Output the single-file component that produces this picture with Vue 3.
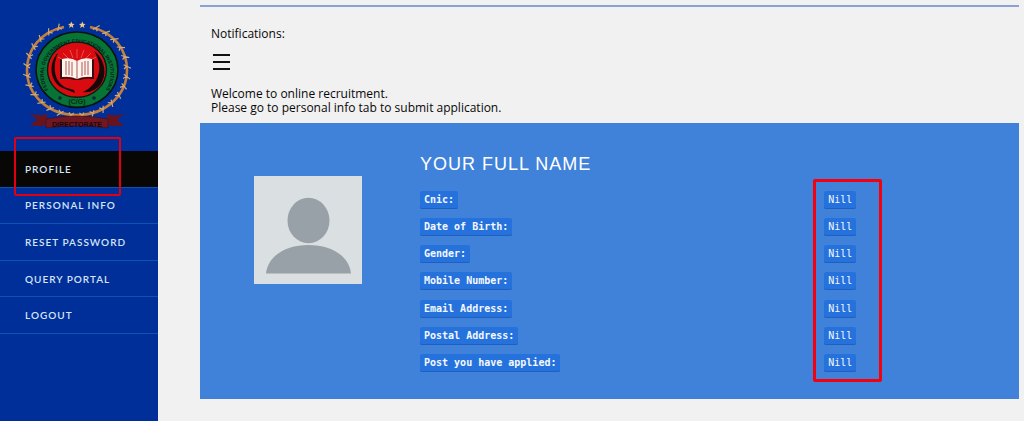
<script setup>
const links = ['Profile', 'Personal Info', 'Reset Password', 'Query Portal', 'Logout']

const fields = [
  'Cnic:',
  'Date of Birth:',
  'Gender:',
  'Mobile Number:',
  'Email Address:',
  'Postal Address:',
  'Post you have applied:',
]

// Thorns of the wreath, spread round the ellipse with a gap at the top for the stars.
const thorns = Array.from({ length: 26 }, (_, i) => {
  const a = ((-68 + (i * 316) / 25) * Math.PI) / 180
  const at = (rx, ry, t) => `${(77 + rx * Math.cos(t)).toFixed(1)} ${(70 + ry * Math.sin(t)).toFixed(1)}`
  return `M${at(47, 43, a - 0.04)} L${at(54, 49, a + 0.05)} M${at(50, 46, a)} L${at(47, 43, a + 0.06)}`
}).join(' ')
</script>

<template>
  <div class="page">
    <aside class="sidebar">
      <svg class="logo" viewBox="20 18 114 116" role="img" aria-label="Federal Government Educational Institutions Directorate">
        <defs>
          <path id="ring-top" d="M50 92 A33.500 31 0 1 1 104 92" />
        </defs>
        <path d="M64 27 C40 32 27 50 27 70 C27 94 47 115 77 115 C107 115 127 94 127 70 C127 50 114 32 90 27" fill="none" stroke="#c47f3c" stroke-width="2.6" />
        <path :d="thorns" fill="none" stroke="#cfa978" stroke-width="1.2" />
        <g fill="#f0c987">
          <path d="M71.3 21.5l1 2.200 2.300.2-1.800 1.600.6 2.400-2.100-1.300-2.100 1.300.6-2.400-1.800-1.600 2.300-.2z" />
          <path d="M82.3 21.5l1 2.200 2.300.2-1.800 1.600.6 2.400-2.100-1.300-2.100 1.300.6-2.400-1.800-1.600 2.300-.2z" />
        </g>
        <ellipse cx="77" cy="69.7" rx="41" ry="37.7" fill="#077335" stroke="#07130f" stroke-width="1.6" />
        <ellipse cx="77" cy="69.7" rx="29.5" ry="27.6" fill="#d90b10" stroke="#0b1a10" stroke-width="1.4" />
        <text class="ring-text"><textPath href="#ring-top" startOffset="50%" text-anchor="middle">FEDERAL GOVERNMENT EDUCATIONAL INSTITUTIONS</textPath></text>
        <text class="ring-mark" x="77" y="103.5" text-anchor="middle">(C/G)</text>
        <circle cx="60" cy="98" r="1.8" fill="#07283a" />
        <circle cx="94" cy="98" r="1.8" fill="#07283a" />
        <path d="M77 58V49M73 58l-3-8M81 58l3-8M69 59l-6-6M85 59l6-6M65 61l-7-4M89 61l7-4" stroke="#f08070" stroke-width=".6" />
        <path d="M58 53C48 62 49 84 65 89L75 93 74 90 67 88C54 83 52 66 58 53z" fill="#160809" />
        <path d="M94 51C108 61 108 83 94 90Q89 93 83 92C98 85 105 68 94 51z" fill="#160809" />
        <path d="M60 59l3 1v17q8 0 14 2 6-2 14-2V60l3-1v20q-9-1-14 1h-6q-5-2-14-1z" fill="#321012" />
        <path d="M62 59q9-2 15 2 6-4 15-2v18q-9-1-15 2-6-3-15-2z" fill="#fff3ed" />
        <path d="M77 61v18M66 61v14M69 61v14M72 62v14M82 62v14M85 61v14M88 61v14" stroke="#b36661" stroke-width="1.1" />
        <path d="M27 113q12 4 20 1v11q-9 2-17 0l7-5q-4-5-10-7zM127 113q-12 4-20 1v11q9 2 17 0l-7-5q4-5 10-7z" fill="#68141f" />
        <path d="M46 119q31-6 62 0v9q-31-4-62 0z" fill="#701720" stroke="#3d1025" stroke-width=".7" />
        <text class="ribbon-text" x="77" y="126.5" text-anchor="middle">DIRECTORATE</text>
      </svg>
      <nav class="menu">
        <a v-for="(link, i) in links" :key="link" href="#" :class="{ active: i === 0 }">{{ link }}</a>
      </nav>
      <span class="mark mark-profile"></span>
    </aside>

    <main class="content">
      <section class="notice">
        <p>Notifications:</p>
        <button class="burger" type="button" aria-label="Menu">
          <svg viewBox="0 0 20 18"><path d="M2 2h17M2 9h17M2 16h17" stroke="#111" stroke-width="2" /></svg>
        </button>
        <p>Welcome to online recruitment.<br />Please go to personal info tab to submit application.</p>
      </section>

      <section class="card">
        <svg class="photo" viewBox="0 0 108 108" role="img" aria-label="Profile photo">
          <rect width="108" height="108" fill="#dadfe1" />
          <ellipse cx="54.5" cy="44.5" rx="21" ry="22.8" fill="#98a1a7" />
          <path d="M12 97.500C14 79 33 69 54.500 69S95 79 97 97.500z" fill="#98a1a7" />
        </svg>
        <div class="details">
          <h1>YOUR FULL NAME</h1>
          <dl>
            <template v-for="(field, i) in fields" :key="field">
              <dt><code>{{ field }}</code></dt>
              <dd><code>Nill</code><span v-if="i === 0" class="mark mark-values"></span></dd>
            </template>
          </dl>
        </div>
      </section>
    </main>
  </div>
</template>

<style>
body {
  margin: 0;
  background: #f1f1f1;
}
</style>

<style scoped>
* {
  box-sizing: border-box;
}
.page {
  display: flex;
  min-height: 100vh;
  font-family: "Open Sans", "Noto Sans", sans-serif;
  color: #080808;
}
.sidebar {
  position: relative;
  flex: 0 0 158px;
  padding-top: 18px;
  background: #002f99;
}
.logo {
  display: block;
  width: 114px;
  height: 116px;
  margin: 0 0 17px 20px;
}
.ring-text {
  font: bold 5px "Liberation Sans", sans-serif;
  fill: #041c1c;
}
.ring-mark {
  font: bold 7px "Liberation Sans", sans-serif;
  fill: #06281c;
}
.ribbon-text {
  font: bold 7px "Liberation Sans", sans-serif;
  fill: #180813;
}
.menu {
  display: grid;
  grid-auto-rows: 1fr;
  min-height: 183px;
}
.menu a {
  display: flex;
  align-items: center;
  padding-left: 25px;
  border-bottom: 1px solid #0a54b4;
  color: #d5e4f7;
  font-family: Lato, sans-serif;
  font-size: 10px;
  font-weight: 600;
  line-height: 14px;
  letter-spacing: 1px;
  text-transform: uppercase;
  text-decoration: none;
}
.menu a.active {
  background: #090705;
}
.mark {
  position: absolute;
  border: 2px solid #e00012;
  border-radius: 2px;
  pointer-events: none;
}
.mark-profile {
  top: 137px;
  left: 14px;
  width: 107px;
  height: 59px;
}
.content {
  flex: 1;
  min-width: 0;
  padding: 5px 5px 22px 42px;
}
.notice {
  padding: 20px 11px 8px;
  border-top: 2px solid #8ba1d3;
  font-size: 12px;
  line-height: 14px;
}
.notice p {
  margin: 0;
}
.burger {
  display: block;
  width: 20px;
  height: 18px;
  margin: 12px 0 16px;
  padding: 0;
  border: 0;
  background: none;
}
.burger svg {
  display: block;
  width: 20px;
  height: 18px;
}
.card {
  display: grid;
  grid-template-columns: 220px 1fr;
  padding: 30px 0 22px;
  background: #4082da;
}
.photo {
  width: 108px;
  height: 108px;
  margin: 23px 0 0 54px;
}
h1 {
  margin: 0 0 11px;
  color: #fff;
  font: 18px/22px "Liberation Sans", Arial, sans-serif;
  letter-spacing: 1px;
}
dl {
  display: grid;
  grid-template-columns: 27fr 13fr;
  grid-auto-rows: 1fr;
  align-items: center;
  min-height: 191px;
  margin: 0;
}
dt,
dd {
  display: flex;
  position: relative;
  margin: 0;
}
code {
  padding: 2px 4px;
  border-radius: 2px;
  background: #2572dd;
  box-shadow: inset 0 -1px 0 #205fbd;
  color: #f4f8ff;
  font: 10px/14px "DejaVu Sans Mono", monospace;
}
dt code {
  font-weight: bold;
}
.mark-values {
  top: -12px;
  left: -11px;
  width: 69px;
  height: 203px;
  border: 3px solid #f5000c;
}
</style>
